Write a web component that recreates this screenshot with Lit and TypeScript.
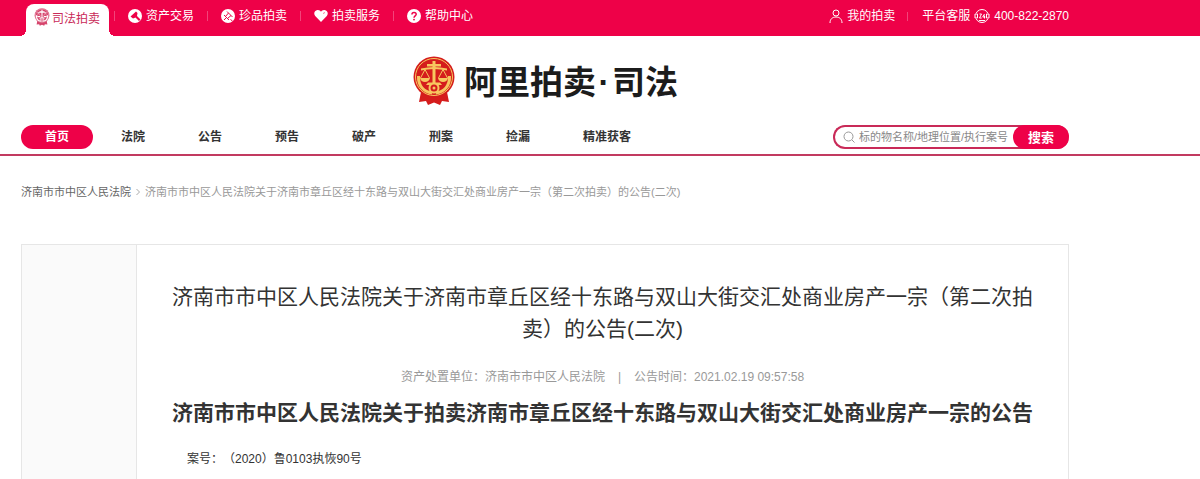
import { LitElement, html, css, svg } from "lit";
import { customElement } from "lit/decorators.js";

const emblem = (main: string, detail: string) => svg`
  <path fill=${main} d="M9 36 L7 46 L14 45 L16 49 L22 46.500 L28 49 L30 45 L37 46 L35 36 Z"/>
  <circle cx="22" cy="21" r="20.500" fill=${main}/>
  <circle cx="22" cy="21" r="18.500" fill="none" stroke=${detail} stroke-width="1"/>
  <g fill="none" stroke=${detail} stroke-width="3">
    <path d="M6.500 20 C6 30 12 36 20 37"/>
    <path d="M37.500 20 C38 30 32 36 24 37"/>
  </g>
  <g fill=${detail}>
    <path d="M20.500 5 H23.500 V8 H29 V10.500 H23.500 V27 H20.500 V10.500 H15 V8 H20.500 Z"/>
    <path d="M9 12.500 Q22 9.500 35 12.500 V14.500 Q22 11.500 9 14.500 Z"/>
    <path d="M8 22 H18 Q17 26 13 26 Q9 26 8 22 Z"/>
    <path d="M26 22 H36 Q35 26 31 26 Q27 26 26 22 Z"/>
    <path d="M16 26.500 H28 L30 29 H14 Z"/>
  </g>
  <path d="M13 13.500 L8.500 22 M13 13.500 L17.500 22 M31 13.500 L26.500 22 M31 13.500 L35.500 22" stroke=${detail} stroke-width="1" fill="none"/>
  <circle cx="22" cy="32" r="4.500" fill=${main} stroke=${detail} stroke-width="2"/>
  <circle cx="22" cy="32" r="1.500" fill=${detail}/>`;

const glyphs = {
  gavel: svg`<circle cx="7" cy="7" r="7" fill="#fff"/>
    <path fill="#ee0148" d="M8 2.500 L9.500 4 L9 7 L12.500 10.500 L11 12 L7.500 8.500 L5 9.500 L2.500 7.500 Z"/>`,
  hammer: svg`<circle cx="7" cy="7" r="7" fill="#fff"/>
    <g fill="none" stroke="#ee0148" stroke-width="1">
      <path d="M6 2.500 L11.500 8 M3 6 L8 11 M7.500 4 L4.500 7.500 M10 6.500 L6.500 9.500 M6 8 L3 11"/>
      <path d="M9.500 10.500 L11.500 12"/>
    </g>`,
  heart: svg`<path fill="#fff" d="M7 13 L1.200 7 C-.6 5 .2 1.500 3.500 1 C5.200 .8 6.300 1.700 7 2.700 C7.700 1.700 8.800 .8 10.500 1 C13.800 1.500 14.600 5 12.800 7 Z"/>
    <path d="M9 4.500 L11 3.500" stroke="#f5799e" stroke-width="1" fill="none"/>`,
  help: svg`<circle cx="7" cy="7" r="7" fill="#fff"/>
    <path d="M4.900 5.600 C4.900 2.700 9.200 2.800 9.200 5.300 C9.200 6.900 7 6.900 7 8.700" fill="none" stroke="#ee0148" stroke-width="1.500"/>
    <circle cx="7" cy="10.600" r=".9" fill="#ee0148"/>`,
};

const services = [
  { label: "资产交易", icon: glyphs.gavel },
  { label: "珍品拍卖", icon: glyphs.hammer },
  { label: "拍卖服务", icon: glyphs.heart },
  { label: "帮助中心", icon: glyphs.help },
];

const sections = ["法院", "公告", "预告", "破产", "刑案", "捡漏", "精准获客"];

@customElement("site-topbar")
export class SiteTopbar extends LitElement {
  static styles = css`
    :host { display: block; background: #ee0148; color: #fff; font-size: 12px; }
    a { color: inherit; text-decoration: none; }
    svg { display: block; flex: none; }
    .inner { box-sizing: border-box; max-width: 1069px; height: 36px; padding-left: 26px; display: flex; justify-content: space-between; }
    .group { display: flex; align-items: center; padding-bottom: 4px; box-sizing: border-box; }
    .tab { position: relative; box-sizing: border-box; align-self: flex-start; display: flex; align-items: center; gap: 2px; height: 32px; width: 83px; margin: 4px 5px 0 0; padding: 0 0 6px 8px; border-radius: 8px 8px 0 0; background: #fff; color: #c92a58; }
    .tab::before, .tab::after { content: ""; position: absolute; bottom: 0; width: 6px; height: 6px; }
    .tab::before { right: 100%; background: radial-gradient(circle at 0 0, transparent 6px, #fff 6px); }
    .tab::after { left: 100%; background: radial-gradient(circle at 100% 0, transparent 6px, #fff 6px); }
    .item { display: flex; align-items: center; gap: 4px; line-height: 16px; }
    .service { box-sizing: border-box; width: 93px; height: 10px; padding-left: 13px; border-left: 1px solid #f2447a; }
    .divider { width: 1px; height: 9px; margin: 0 14px 0 12px; background: #f2447a; }
  `;
  render() {
    return html`
      <div class="inner">
        <nav class="group" aria-label="频道">
          <a class="tab" href="#"><svg width="16" height="18" viewBox="0 0 44 50">${emblem("#d6456d", "#fff")}</svg>司法拍卖</a>
          ${services.map((s) => html`<a class="item service" href="#"><svg width="14" height="14" viewBox="0 0 14 14">${s.icon}</svg>${s.label}</a>`)}
        </nav>
        <div class="group">
          <a class="item" href="#"><svg width="14" height="14" viewBox="0 0 14 14" fill="none" stroke="#fff" stroke-width="1"><circle cx="7" cy="4" r="3"/><path d="M1 14 C1 10 3.500 8 7 8 C10.500 8 13 10 13 14"/></svg>我的拍卖</a>
          <span class="divider"></span>
          <span class="item">平台客服
            <svg width="16" height="16" viewBox="0 0 16 16"><circle cx="8" cy="8" r="6.500" fill="none" stroke="#fff" stroke-width="1"/><path fill="#ee0148" d="M0 5 H16 V11 H0 Z"/><path d="M1 6 H3.500 V10 H1 Z M5.500 6 H7.500 L5.500 10 H7.700 M10.500 6 L8.700 9 H11.300 M10.500 7.500 V10.500 M12.500 6 H15 V10 H12.500 Z M5 12.500 H11" fill="none" stroke="#fff" stroke-width="1"/></svg>
            400-822-2870</span>
        </div>
      </div>`;
  }
}

@customElement("site-header")
export class SiteHeader extends LitElement {
  static styles = css`
    :host { display: block; border-bottom: 2px solid #c23a60; }
    a { color: inherit; text-decoration: none; }
    .inner { box-sizing: border-box; max-width: 1069px; padding-left: 21px; }
    .logo { display: flex; align-items: center; justify-content: center; gap: 8px; padding-top: 20px; color: #1c1c1c; font-size: 33px; font-weight: 700; line-height: 46px; }
    .logo svg { display: block; }
    .name { display: flex; padding-top: 4px; }
    .dot { width: 16px; text-align: center; }
    .row { display: flex; align-items: center; justify-content: space-between; padding: 19px 0 5px; }
    .nav { display: flex; align-items: center; gap: 53px; font-size: 12px; font-weight: 700; line-height: 24px; color: #333; }
    .home { width: 72px; margin-right: -25px; border-radius: 12px; background: #ee0148; color: #fff; text-align: center; }
    .search { box-sizing: border-box; display: flex; align-items: center; width: 236px; height: 24px; border: 2px solid #c92a58; border-right: 0; border-radius: 12px; }
    .search svg { flex: none; margin: 0 4px 0 8px; }
    .field { flex: 1; min-width: 0; padding: 0; border: 0; outline: 0; background: none; color: #333; font: inherit; font-size: 11px; }
    .field::placeholder { color: #888; opacity: 1; }
    .submit { flex: none; width: 56px; height: 24px; padding: 2px 0 0; border: 0; border-radius: 12px; background: #ee0148; color: #fff; font: inherit; font-size: 13px; font-weight: 700; line-height: 22px; }
  `;
  render() {
    return html`
      <div class="inner">
        <a class="logo" href="#">
          <svg width="44" height="50" viewBox="0 0 44 50">${emblem("#d51c1c", "#f7c65f")}</svg>
          <span class="name"><span>阿里拍卖</span><span class="dot">·</span><span>司法</span></span>
        </a>
        <div class="row">
          <nav class="nav" aria-label="主导航">
            <a class="home" href="#">首页</a>
            ${sections.map((s) => html`<a href="#">${s}</a>`)}
          </nav>
          <form class="search" role="search" @submit=${(e: Event) => e.preventDefault()}>
            <svg width="12" height="12" viewBox="0 0 12 12" fill="none" stroke="#999" stroke-width="1"><circle cx="5.500" cy="5.500" r="4.500"/><path d="M9 9 L11.500 11.500"/></svg>
            <input class="field" type="text" aria-label="搜索" placeholder="标的物名称/地理位置/执行案号">
            <button class="submit" type="submit">搜索</button>
          </form>
        </div>
      </div>`;
  }
}

@customElement("court-notice")
export class CourtNotice extends LitElement {
  static styles = css`
    :host { flex: 1; display: flex; flex-direction: column; }
    a { color: inherit; text-decoration: none; }
    .inner { flex: 1; box-sizing: border-box; width: 100%; max-width: 1069px; padding-left: 21px; display: flex; flex-direction: column; }
    .crumbs { display: flex; align-items: center; gap: 3px; padding: 28px 0 44px; font-size: 11px; line-height: 16px; color: #999; white-space: nowrap; }
    .court { color: #666; }
    .panel { flex: 1; display: grid; grid-template-columns: 115px 1fr; border: 1px solid #e6e6e6; border-bottom: 0; }
    .side { background: #fafafa; border-right: 1px solid #e6e6e6; }
    .article { padding: 36px 32px 0; color: #333; }
    .title { margin: 0; font-size: 21px; font-weight: 400; line-height: 32px; text-align: center; }
    .meta { display: flex; justify-content: center; gap: 13px; margin: 22px 0 0; font-size: 12px; line-height: 20px; color: #999; }
    .subtitle { margin: 10px 0 0; font-size: 21px; font-weight: 700; line-height: 32px; text-align: center; }
    .case { margin: 20px 0 0; padding-left: 18px; font-size: 12px; line-height: 20px; }
  `;
  render() {
    return html`
      <div class="inner">
        <nav class="crumbs" aria-label="面包屑">
          <a class="court" href="#">济南市市中区人民法院</a>
          <svg width="8" height="8" viewBox="0 0 8 8" fill="none" stroke="#aaa" stroke-width="1"><path d="M2.500 1 L5.500 4 L2.500 7"/></svg>
          <span>济南市市中区人民法院关于济南市章丘区经十东路与双山大街交汇处商业房产一宗（第二次拍卖）的公告(二次)</span>
        </nav>
        <div class="panel">
          <aside class="side"></aside>
          <article class="article">
            <h1 class="title">济南市市中区人民法院关于济南市章丘区经十东路与双山大街交汇处商业房产一宗（第二次拍卖）的公告(二次)</h1>
            <p class="meta"><span>资产处置单位：济南市市中区人民法院</span><span>|</span><span>公告时间：2021.02.19 09:57:58</span></p>
            <h2 class="subtitle">济南市市中区人民法院关于拍卖济南市章丘区经十东路与双山大街交汇处商业房产一宗的公告</h2>
            <p class="case">案号：（2020）鲁0103执恢90号</p>
          </article>
        </div>
      </div>`;
  }
}

@customElement("app-root")
export class AppRoot extends LitElement {
  static styles = css`
    :host { display: flex; flex-direction: column; min-height: 100vh; background: #fff; font-family: "Liberation Sans", "Noto Sans CJK SC", sans-serif; text-spacing-trim: space-all; }
  `;
  render() {
    return html`<site-topbar></site-topbar><site-header></site-header><court-notice></court-notice>`;
  }
}
